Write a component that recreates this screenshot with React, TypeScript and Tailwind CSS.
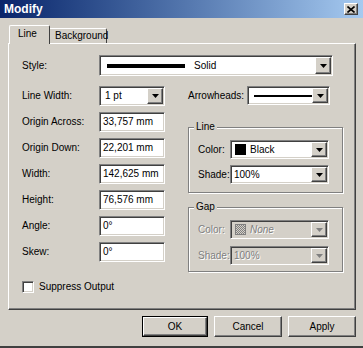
const sunken =
    "border border-t-[#808080] border-l-[#808080] border-b-white border-r-white shadow-[inset_1px_1px_0_#404040,inset_-1px_-1px_0_#d4d0c8]";
const raised =
    "border border-t-white border-l-white border-b-[#404040] border-r-[#404040] shadow-[inset_-1px_-1px_0_#808080]";
const etched = "border border-[#808080] shadow-[1px_1px_0_#fff,inset_1px_1px_0_#fff]";
const disabledText = "text-[#808080] [text-shadow:1px_1px_0_#fff]";

function Arrow({ disabled }: { disabled?: boolean }) {
    return (
        <div className={`w-[16px] h-full bg-[#d4d0c8] flex items-center justify-center ${raised}`}>
            <svg width="7" height="4" viewBox="0 0 7 4">
                <path d="M0 0h7L3.5 4z" fill={disabled ? "#808080" : "#000"} />
            </svg>
        </div>
    );
}

function Select({
    width,
    children,
    disabled,
}: {
    width: string;
    children?: React.ReactNode;
    disabled?: boolean;
}) {
    return (
        <div className={`${width} h-full p-px flex ${sunken} ${disabled ? "bg-[#d4d0c8]" : "bg-white"}`}>
            <div className="flex-1 flex items-center pl-[2px] overflow-hidden">{children}</div>
            <Arrow disabled={disabled} />
        </div>
    );
}

function Field({ label, value }: { label: string; value: string }) {
    return (
        <div className="flex items-center h-[20px]">
            <span className="w-[77px]">{label}</span>
            <div className={`w-[66px] h-full bg-white flex items-center pl-[3px] ${sunken}`}>{value}</div>
        </div>
    );
}

function Button({ label, primary }: { label: string; primary?: boolean }) {
    return (
        <div
            className={`h-[21px] flex ${primary ? "w-[66px] border border-black" : "w-[68px]"}`}
        >
            <div className={`flex-1 flex items-center justify-center bg-[#d4d0c8] ${raised}`}>{label}</div>
        </div>
    );
}

export default function App() {
    return (
        <div className="w-[363px] h-[348px] bg-[#d4d0c8] flex flex-col overflow-hidden font-['Liberation_Sans',Arial,sans-serif] text-[10px] leading-none text-black border-b-2 border-b-[#404040]">
            <div className="h-[18px] shrink-0 flex items-center justify-between pl-[4px] pr-[5px] bg-gradient-to-r from-[#0a246a] to-[#a6caf0]">
                <span className="text-white font-bold text-[12px]">Modify</span>
                <div className={`w-[14px] h-[12px] bg-[#d4d0c8] flex items-center justify-center ${raised}`}>
                    <svg width="8" height="7" viewBox="0 0 8 7">
                        <path d="M0.5 0.5L7.5 6.5M7.5 0.5L0.5 6.5" stroke="#000" strokeWidth="1.6" />
                    </svg>
                </div>
            </div>

            <div className="pl-[8px] pt-[7px]">
                <div className="flex items-end h-[18px] pl-[1px]">
                    <div className="relative z-10 w-[41px] h-[19px] -mb-px bg-[#d4d0c8] border-t border-l border-t-white border-l-white border-r border-r-[#404040] rounded-t-[2px] flex items-center pl-[8px] pb-[2px]">
                        Line
                    </div>
                    <div className="w-[57px] h-[15px] bg-[#d4d0c8] border-t border-t-white border-r border-r-[#404040] rounded-tr-[2px] flex items-center pl-[5px]">
                        Background
                    </div>
                </div>

                <div className={`w-[348px] h-[267px] pl-[13px] pt-[11px] ${raised}`}>
                    <div className="flex items-center h-[21px]">
                        <span className="w-[77px]">Style:</span>
                        <Select width="w-[234px]">
                            <div className="w-[78px] h-[4px] bg-black ml-[4px]" />
                            <span className="ml-[9px]">Solid</span>
                        </Select>
                    </div>

                    <div className="flex mt-[10px] h-[186px]">
                        <div className="w-[143px] flex flex-col gap-[6px]">
                            <div className="flex items-center h-[20px]">
                                <span className="w-[77px]">Line Width:</span>
                                <Select width="w-[66px]">
                                    <span className="pl-[2px]">1 pt</span>
                                </Select>
                            </div>
                            <Field label="Origin Across:" value="33,757 mm" />
                            <Field label="Origin Down:" value="22,201 mm" />
                            <Field label="Width:" value="142,625 mm" />
                            <Field label="Height:" value="76,576 mm" />
                            <Field label="Angle:" value="0°" />
                            <Field label="Skew:" value="0°" />
                        </div>

                        <div className="ml-[23px] w-[155px] flex flex-col">
                            <div className="flex items-center h-[19px]">
                                <span className="w-[59px]">Arrowheads:</span>
                                <Select width="w-[83px]">
                                    <div className="w-[60px] h-[2px] bg-black ml-[3px]" />
                                </Select>
                            </div>

                            <div className={`relative mt-[22px] h-[66px] pt-[12px] pl-[9px] flex flex-col gap-[6px] ${etched}`}>
                                <span className="absolute -top-[6px] left-[5px] px-[2px] bg-[#d4d0c8]">Line</span>
                                <div className="flex items-center h-[19px]">
                                    <span className="w-[32px]">Color:</span>
                                    <Select width="w-[99px]">
                                        <div className="w-[11px] h-[11px] bg-black ml-[1px]" />
                                        <span className="ml-[4px]">Black</span>
                                    </Select>
                                </div>
                                <div className="flex items-center h-[19px]">
                                    <span className="w-[32px]">Shade:</span>
                                    <Select width="w-[99px]">
                                        <span>100%</span>
                                    </Select>
                                </div>
                            </div>

                            <div className={`relative mt-[14px] h-[65px] pt-[12px] pl-[9px] flex flex-col gap-[7px] ${etched}`}>
                                <span className="absolute -top-[6px] left-[5px] px-[2px] bg-[#d4d0c8]">Gap</span>
                                <div className="flex items-center h-[19px]">
                                    <span className={`w-[32px] ${disabledText}`}>Color:</span>
                                    <Select width="w-[99px]" disabled>
                                        <div className="w-[11px] h-[11px] ml-[1px] border border-[#808080] bg-[repeating-conic-gradient(#808080_0_25%,#d4d0c8_0_50%)] bg-[length:2px_2px]" />
                                        <span className={`ml-[4px] italic ${disabledText}`}>None</span>
                                    </Select>
                                </div>
                                <div className="flex items-center h-[19px]">
                                    <span className={`w-[32px] ${disabledText}`}>Shade:</span>
                                    <Select width="w-[99px]" disabled>
                                        <span className={disabledText}>100%</span>
                                    </Select>
                                </div>
                            </div>
                        </div>
                    </div>

                    <div className="flex items-center mt-[9px] h-[12px]">
                        <div className={`w-[12px] h-[12px] bg-white ${sunken}`} />
                        <span className="ml-[5px]">Suppress Output</span>
                    </div>
                </div>
            </div>

            <div className="flex justify-end gap-[6px] pr-[7px] mt-[6px]">
                <Button label="OK" primary />
                <Button label="Cancel" />
                <Button label="Apply" />
            </div>
        </div>
    );
}
